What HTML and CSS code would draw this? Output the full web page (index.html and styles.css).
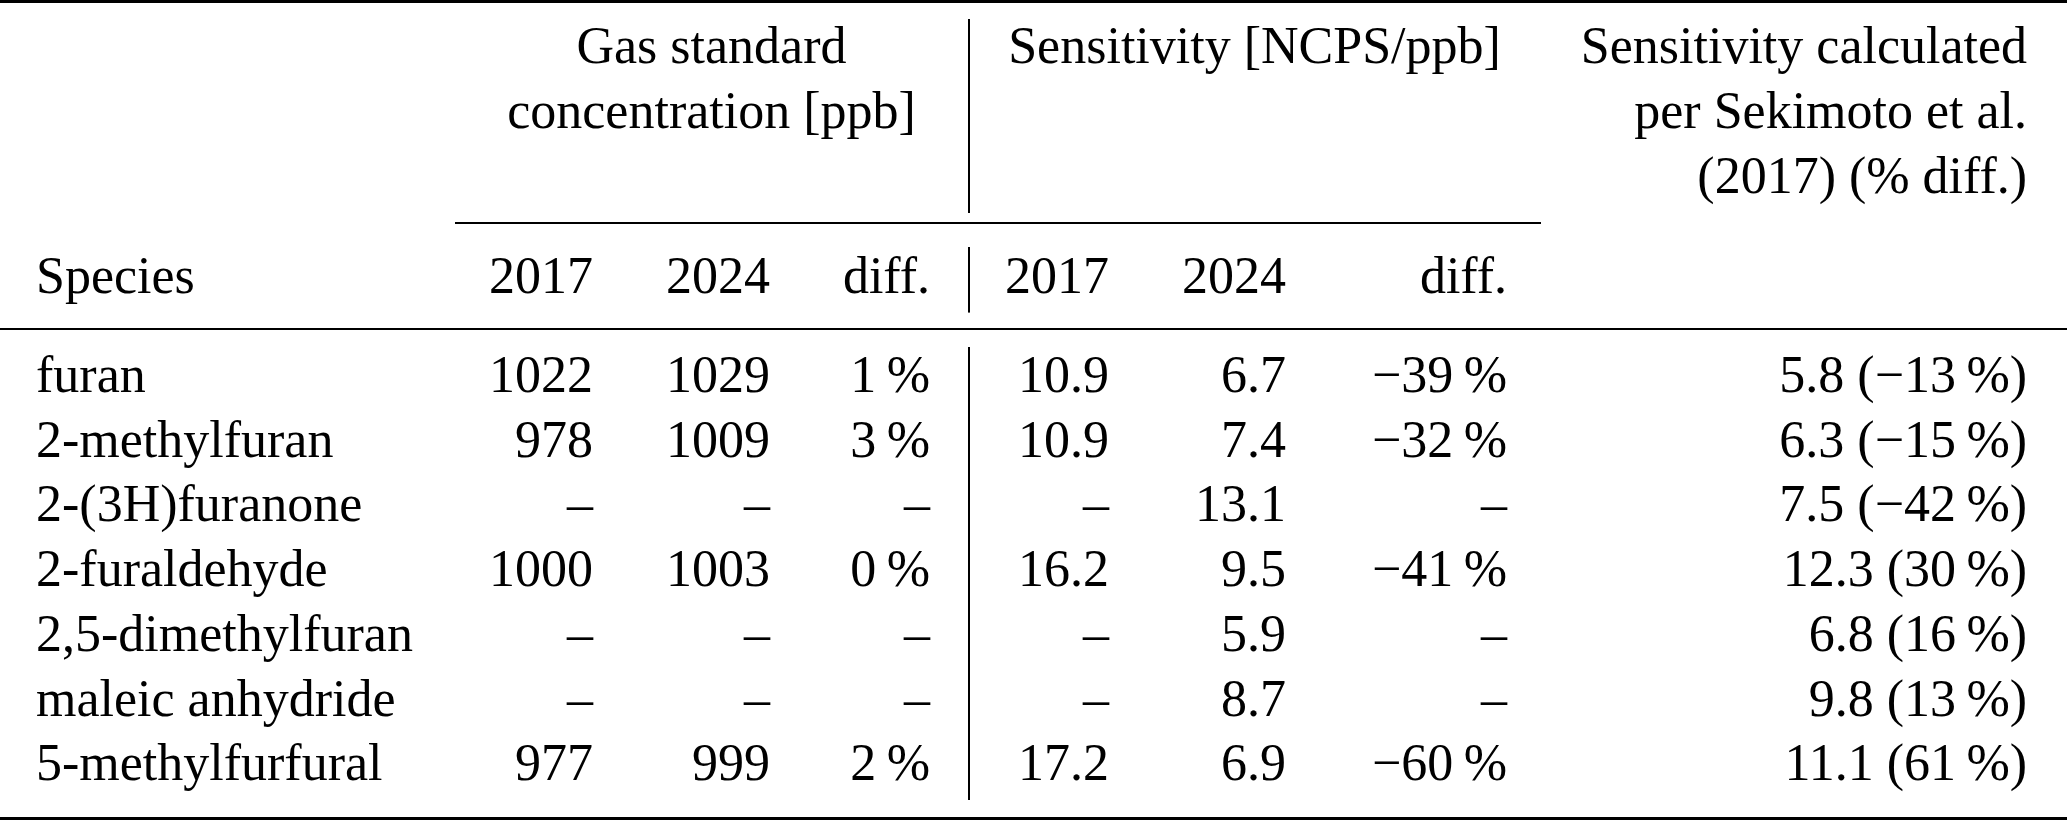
FILE: index.html
```html
<!DOCTYPE html>
<html lang="en">
<head>
<meta charset="utf-8">
<title>Furan sensitivities</title>
<link rel="stylesheet" href="styles.css">
</head>
<body>
<table class="data">
  <colgroup>
    <col class="w-species">
    <col class="w-c1">
    <col class="w-c2">
    <col class="w-c3">
    <col class="w-c4">
    <col class="w-c5">
    <col class="w-c6">
    <col class="w-c7">
  </colgroup>
  <thead>
    <tr class="group-row">
      <th class="stub"></th>
      <th colspan="3" class="group">Gas standard<br>concentration [ppb]</th>
      <th colspan="3" class="group vl">Sensitivity [NCPS/ppb]</th>
      <th class="calc">Sensitivity calculated<br>per Sekimoto et al.<br>(2017) (% diff.)</th>
    </tr>
    <tr class="label-row">
      <th class="name">Species</th>
      <th>2017</th>
      <th>2024</th>
      <th>diff.</th>
      <th class="vl">2017</th>
      <th>2024</th>
      <th>diff.</th>
      <th></th>
    </tr>
  </thead>
  <tbody>
    <tr>
      <td class="name">furan</td>
      <td>1022</td><td>1029</td><td>1&#8201;%</td>
      <td class="vl">10.9</td><td>6.7</td><td>&minus;39&#8201;%</td>
      <td>5.8 (&minus;13&#8201;%)</td>
    </tr>
    <tr>
      <td class="name">2-methylfuran</td>
      <td>978</td><td>1009</td><td>3&#8201;%</td>
      <td class="vl">10.9</td><td>7.4</td><td>&minus;32&#8201;%</td>
      <td>6.3 (&minus;15&#8201;%)</td>
    </tr>
    <tr>
      <td class="name">2-(3H)furanone</td>
      <td>&ndash;</td><td>&ndash;</td><td>&ndash;</td>
      <td class="vl">&ndash;</td><td>13.1</td><td>&ndash;</td>
      <td>7.5 (&minus;42&#8201;%)</td>
    </tr>
    <tr>
      <td class="name">2-furaldehyde</td>
      <td>1000</td><td>1003</td><td>0&#8201;%</td>
      <td class="vl">16.2</td><td>9.5</td><td>&minus;41&#8201;%</td>
      <td>12.3 (30&#8201;%)</td>
    </tr>
    <tr>
      <td class="name">2,5-dimethylfuran</td>
      <td>&ndash;</td><td>&ndash;</td><td>&ndash;</td>
      <td class="vl">&ndash;</td><td>5.9</td><td>&ndash;</td>
      <td>6.8 (16&#8201;%)</td>
    </tr>
    <tr>
      <td class="name">maleic anhydride</td>
      <td>&ndash;</td><td>&ndash;</td><td>&ndash;</td>
      <td class="vl">&ndash;</td><td>8.7</td><td>&ndash;</td>
      <td>9.8 (13&#8201;%)</td>
    </tr>
    <tr>
      <td class="name">5-methylfurfural</td>
      <td>977</td><td>999</td><td>2&#8201;%</td>
      <td class="vl">17.2</td><td>6.9</td><td>&minus;60&#8201;%</td>
      <td>11.1 (61&#8201;%)</td>
    </tr>
  </tbody>
</table>
</body>
</html>
```
FILE: styles.css
```css
html, body {
  margin: 0;
  padding: 0;
  background: #fff;
}

body {
  font-family: "Liberation Serif", "Times New Roman", serif;
  font-size: 52px;
  color: #000;
}

.data {
  width: 2067px;
  table-layout: fixed;
  border-collapse: separate;
  border-spacing: 0;
  border-top: 3px solid #000;
  border-bottom: 3px solid #000;
}

.w-species { width: 455px; }
.w-c1 { width: 174px; }
.w-c2 { width: 177px; }
.w-c3 { width: 162px; }
.w-c4 { width: 177px; }
.w-c5 { width: 177px; }
.w-c6 { width: 219px; }
.w-c7 { width: 526px; }

th, td {
  padding: 0;
  font-weight: normal;
  white-space: nowrap;
  text-align: right;
}

/* vertical rule between the two groups, broken at the horizontal rules */
.vl {
  background-image: linear-gradient(#000, #000);
  background-repeat: no-repeat;
}

/* header: group titles */
.group-row th {
  vertical-align: top;
  line-height: 65px;
  padding: 10.3px 0 15.7px;
}

.group-row .group {
  text-align: center;
  border-bottom: 2px solid #000;
}

.group-row .vl {
  background-position: left 0 top 16px;
  background-size: 2px calc(100% - 24.7px);
}

.group-row .calc {
  text-align: right;
  padding-right: 40px;
}

/* header: column labels */
.label-row th {
  line-height: 65px;
  padding: 18.7px 36px 20.3px 0;
  border-bottom: 2px solid #000;
}

.label-row .vl {
  background-position: left 0 top 22.7px;
  background-size: 2px calc(100% - 38.4px);
}

/* body */
tbody td {
  line-height: 64.7px;
  padding: 0 36px 0 0;
}

tbody tr:first-child td { padding-top: 13.1px; }
tbody tr:last-child td { padding-bottom: 21px; }

tbody td.vl {
  background-position: left 0 top 0;
  background-size: 2px 100%;
}

tbody tr:first-child td.vl {
  background-position: left 0 top 17px;
  background-size: 2px calc(100% - 17px);
}

tbody tr:last-child td.vl {
  background-position: left 0 top 0;
  background-size: 2px calc(100% - 17px);
}

/* per-column padding */
.label-row th:nth-child(4), tbody td:nth-child(4) { padding-right: 38px; }
.label-row th:nth-child(7), tbody td:nth-child(7) { padding-right: 34px; }
.label-row th:nth-child(8), tbody td:nth-child(8) { padding-right: 40px; }

.label-row .name, tbody td.name {
  text-align: left;
  padding-left: 36px;
}
```
